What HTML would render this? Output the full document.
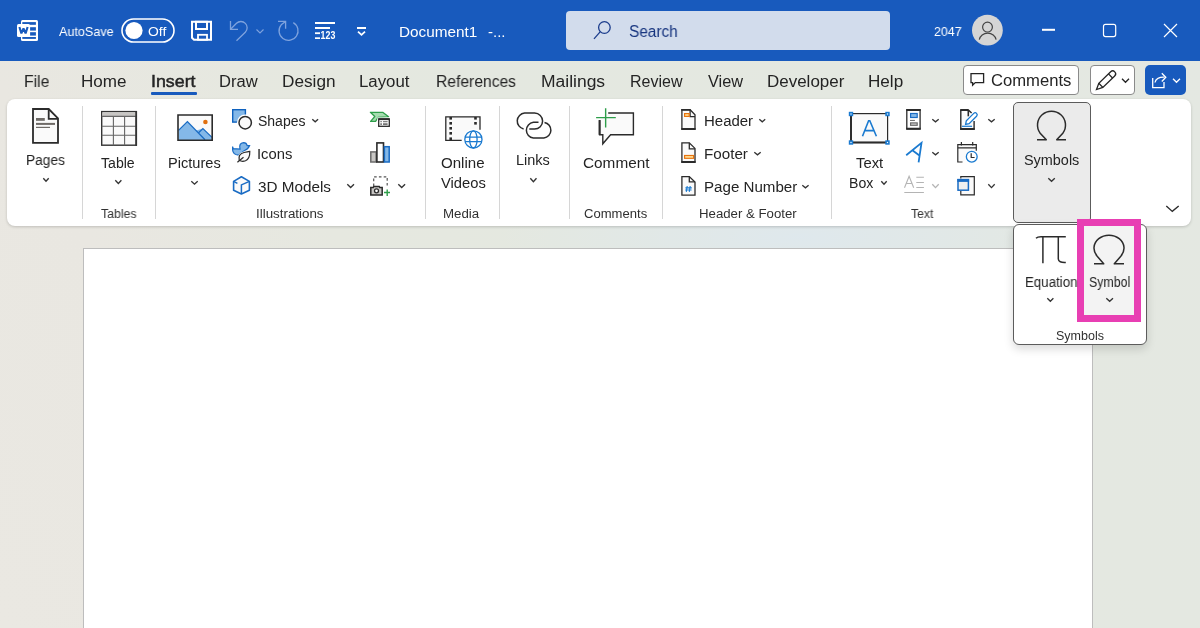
<!DOCTYPE html>
<html><head><meta charset="utf-8"><style>
html,body{margin:0;padding:0;}
body{width:1200px;height:628px;overflow:hidden;position:relative;font-family:"Liberation Sans",sans-serif;
background:radial-gradient(ellipse 300px 60px at 800px 237px, rgba(222,232,238,0.9), rgba(222,232,238,0) 100%),linear-gradient(60deg,#eae8e2 0%,#e9e7e1 20%,#e6e8e0 36%,#e4e8e0 50%,#e4e8e2 100%);}
.t{position:absolute;white-space:nowrap;transform-origin:0 0;will-change:transform;}
.a{position:absolute;overflow:visible}
#title{position:absolute;left:0;top:0;width:1200px;height:61px;background:#185abd;}
#search{position:absolute;left:566px;top:11px;width:324px;height:39px;background:#d2dcec;border-radius:4px;}
#ribbon{position:absolute;left:7px;top:99px;width:1184px;height:127px;background:#fff;border-radius:8px;box-shadow:0 1px 3px rgba(0,0,0,0.18);}
#page{position:absolute;left:83px;top:248px;width:1008px;height:400px;background:#fff;border:1px solid #bdbdbd;}
.sep{position:absolute;top:106px;width:1px;height:113px;background:#d6d6d6;}
#symbtn{position:absolute;left:1013px;top:102px;width:76px;height:119px;background:#ebebeb;border:1px solid #5c5c5c;border-radius:5px;}
#drop{position:absolute;left:1013px;top:224px;width:132px;height:119px;background:#fff;border:1px solid #5c5c5c;border-radius:6px;box-shadow:0 4px 10px rgba(0,0,0,0.15);}
#hl{position:absolute;left:1077px;top:219px;width:50px;height:89px;border:7px solid #e83fb3;background:#f3f3f3;}
.btn{position:absolute;top:65px;height:28px;background:#fff;border:1px solid #8a8a8a;border-radius:4px;}
</style></head><body>
<div id="title"></div>
<div id="search"></div>
<div class="btn" style="left:963px;width:114px"></div>
<div class="btn" style="left:1090px;width:43px"></div>
<div class="btn" style="left:1145px;width:41px;height:30px;border:none;background:#185abd;border-radius:5px"></div>
<div style="position:absolute;left:151px;top:92px;width:46px;height:3px;background:#185abd;border-radius:1px"></div>
<div id="page"></div>
<div id="ribbon"></div>
<div class="sep" style="left:82px"></div>
<div class="sep" style="left:155px"></div>
<div class="sep" style="left:425px"></div>
<div class="sep" style="left:499px"></div>
<div class="sep" style="left:569px"></div>
<div class="sep" style="left:662px"></div>
<div class="sep" style="left:831px"></div>
<div id="symbtn"></div>
<div id="drop"></div>
<div id="hl"></div>
<span class="t" style="left:58.70px;top:25px;font-size:13px;line-height:13px;color:#fff;font-weight:normal;transform:scaleX(0.9672)">AutoSave</span>
<span class="t" style="left:148.00px;top:25px;font-size:13px;line-height:13px;color:#fff;font-weight:normal;transform:scaleX(1.0693)">Off</span>
<span class="t" style="left:398.73px;top:24px;font-size:15px;line-height:15px;color:#fff;font-weight:normal;transform:scaleX(1.0210)">Document1</span>
<span class="t" style="left:488.00px;top:24px;font-size:15px;line-height:15px;color:#fff;font-weight:normal;transform:scaleX(0.9798)">-...</span>
<span class="t" style="left:629.20px;top:24px;font-size:16px;line-height:16px;color:#17357f;font-weight:normal;transform:scaleX(0.9619)">Search</span>
<span class="t" style="left:933.50px;top:25px;font-size:13px;line-height:13px;color:#fff;font-weight:normal;transform:scaleX(0.9516)">2047</span>
<span class="t" style="left:23.62px;top:74px;font-size:16px;line-height:16px;color:#242424;font-weight:normal;transform:scaleX(0.9806)">File</span>
<span class="t" style="left:81.43px;top:74px;font-size:16px;line-height:16px;color:#242424;font-weight:normal;transform:scaleX(1.0651)">Home</span>
<span class="t" style="left:150.89px;top:74px;font-size:16px;line-height:16px;color:#242424;font-weight:normal;-webkit-text-stroke:0.45px #242424;transform:scaleX(1.1119)">Insert</span>
<span class="t" style="left:218.97px;top:74px;font-size:16px;line-height:16px;color:#242424;font-weight:normal;transform:scaleX(1.0331)">Draw</span>
<span class="t" style="left:281.92px;top:74px;font-size:16px;line-height:16px;color:#242424;font-weight:normal;transform:scaleX(1.0750)">Design</span>
<span class="t" style="left:358.95px;top:74px;font-size:16px;line-height:16px;color:#242424;font-weight:normal;transform:scaleX(1.0506)">Layout</span>
<span class="t" style="left:436.02px;top:74px;font-size:16px;line-height:16px;color:#242424;font-weight:normal;transform:scaleX(0.9775)">References</span>
<span class="t" style="left:541.41px;top:74px;font-size:16px;line-height:16px;color:#242424;font-weight:normal;transform:scaleX(1.0921)">Mailings</span>
<span class="t" style="left:630.01px;top:74px;font-size:16px;line-height:16px;color:#242424;font-weight:normal;transform:scaleX(0.9922)">Review</span>
<span class="t" style="left:707.50px;top:74px;font-size:16px;line-height:16px;color:#242424;font-weight:normal;transform:scaleX(1.0191)">View</span>
<span class="t" style="left:766.94px;top:74px;font-size:16px;line-height:16px;color:#242424;font-weight:normal;transform:scaleX(1.0606)">Developer</span>
<span class="t" style="left:868.43px;top:74px;font-size:16px;line-height:16px;color:#242424;font-weight:normal;transform:scaleX(1.0685)">Help</span>
<span class="t" style="left:990.60px;top:73px;font-size:16px;line-height:16px;color:#242424;font-weight:normal;transform:scaleX(1.0394)">Comments</span>
<span class="t" style="left:26.42px;top:153px;font-size:14px;line-height:14px;color:#242424;font-weight:normal;transform:scaleX(0.9794)">Pages</span>
<span class="t" style="left:101.40px;top:156px;font-size:14px;line-height:14px;color:#242424;font-weight:normal;transform:scaleX(1.0065)">Table</span>
<span class="t" style="left:168.26px;top:156px;font-size:14px;line-height:14px;color:#242424;font-weight:normal;transform:scaleX(1.0429)">Pictures</span>
<span class="t" style="left:258.00px;top:114px;font-size:14px;line-height:14px;color:#242424;font-weight:normal;transform:scaleX(0.9962)">Shapes</span>
<span class="t" style="left:256.94px;top:147px;font-size:14px;line-height:14px;color:#242424;font-weight:normal;transform:scaleX(1.0566)">Icons</span>
<span class="t" style="left:258.00px;top:180px;font-size:14px;line-height:14px;color:#242424;font-weight:normal;transform:scaleX(1.0909)">3D Models</span>
<span class="t" style="left:440.90px;top:156px;font-size:14px;line-height:14px;color:#242424;font-weight:normal;transform:scaleX(1.0766)">Online</span>
<span class="t" style="left:440.50px;top:176px;font-size:14px;line-height:14px;color:#242424;font-weight:normal;transform:scaleX(1.0528)">Videos</span>
<span class="t" style="left:516.46px;top:153px;font-size:14px;line-height:14px;color:#242424;font-weight:normal;transform:scaleX(1.0353)">Links</span>
<span class="t" style="left:583.00px;top:156px;font-size:14px;line-height:14px;color:#242424;font-weight:normal;transform:scaleX(1.0955)">Comment</span>
<span class="t" style="left:703.73px;top:114px;font-size:14px;line-height:14px;color:#242424;font-weight:normal;transform:scaleX(1.0695)">Header</span>
<span class="t" style="left:703.71px;top:147px;font-size:14px;line-height:14px;color:#242424;font-weight:normal;transform:scaleX(1.0854)">Footer</span>
<span class="t" style="left:703.72px;top:180px;font-size:14px;line-height:14px;color:#242424;font-weight:normal;transform:scaleX(1.0803)">Page Number</span>
<span class="t" style="left:855.50px;top:156px;font-size:14px;line-height:14px;color:#242424;font-weight:normal;transform:scaleX(1.0587)">Text</span>
<span class="t" style="left:849.49px;top:176px;font-size:14px;line-height:14px;color:#242424;font-weight:normal;transform:scaleX(1.0076)">Box</span>
<span class="t" style="left:1023.90px;top:153px;font-size:14px;line-height:14px;color:#242424;font-weight:normal;transform:scaleX(1.0301)">Symbols</span>
<span class="t" style="left:1024.55px;top:275px;font-size:14px;line-height:14px;color:#242424;font-weight:normal;transform:scaleX(0.9498)">Equation</span>
<span class="t" style="left:1088.60px;top:275px;font-size:14px;line-height:14px;color:#242424;font-weight:normal;transform:scaleX(0.8846)">Symbol</span>
<span class="t" style="left:100.70px;top:208px;font-size:12.5px;line-height:12.5px;color:#303030;font-weight:normal;transform:scaleX(0.9810)">Tables</span>
<span class="t" style="left:256.43px;top:208px;font-size:12.5px;line-height:12.5px;color:#303030;font-weight:normal;transform:scaleX(1.0683)">Illustrations</span>
<span class="t" style="left:443.44px;top:208px;font-size:12.5px;line-height:12.5px;color:#303030;font-weight:normal;transform:scaleX(1.0637)">Media</span>
<span class="t" style="left:584.30px;top:208px;font-size:12.5px;line-height:12.5px;color:#303030;font-weight:normal;transform:scaleX(1.0452)">Comments</span>
<span class="t" style="left:698.84px;top:208px;font-size:12.5px;line-height:12.5px;color:#303030;font-weight:normal;transform:scaleX(1.0576)">Header &amp; Footer</span>
<span class="t" style="left:911.20px;top:208px;font-size:12.5px;line-height:12.5px;color:#303030;font-weight:normal;transform:scaleX(0.9722)">Text</span>
<span class="t" style="left:1055.80px;top:330px;font-size:12.5px;line-height:12.5px;color:#303030;font-weight:normal;transform:scaleX(0.9899)">Symbols</span>
<svg class="a" style="left:42px;top:177px" width="8" height="5.5" viewBox="42 177 8 5.5"><polyline points="43.3,178.3 46.0,181.3 48.7,178.3" fill="none" stroke="#333" stroke-width="1.35"/></svg><svg class="a" style="left:113.7px;top:179.3px" width="8.700000000000003" height="5.699999999999989" viewBox="113.7 179.3 8.700000000000003 5.699999999999989"><polyline points="115.0,180.60000000000002 118.05000000000001,183.8 121.10000000000001,180.60000000000002" fill="none" stroke="#333" stroke-width="1.35"/></svg><svg class="a" style="left:190.4px;top:179.6px" width="9.0" height="5.400000000000006" viewBox="190.4 179.6 9.0 5.400000000000006"><polyline points="191.70000000000002,180.9 194.9,183.8 198.1,180.9" fill="none" stroke="#333" stroke-width="1.35"/></svg><svg class="a" style="left:311.2px;top:117.5px" width="8.400000000000034" height="5.0" viewBox="311.2 117.5 8.400000000000034 5.0"><polyline points="312.5,118.8 315.4,121.3 318.3,118.8" fill="none" stroke="#333" stroke-width="1.35"/></svg><svg class="a" style="left:346.2px;top:183.2px" width="9.300000000000011" height="5.800000000000011" viewBox="346.2 183.2 9.300000000000011 5.800000000000011"><polyline points="347.5,184.5 350.85,187.8 354.2,184.5" fill="none" stroke="#333" stroke-width="1.35"/></svg><svg class="a" style="left:397.3px;top:183.2px" width="9.399999999999977" height="5.800000000000011" viewBox="397.3 183.2 9.399999999999977 5.800000000000011"><polyline points="398.6,184.5 402.0,187.8 405.4,184.5" fill="none" stroke="#333" stroke-width="1.35"/></svg><svg class="a" style="left:529px;top:176.6px" width="8.799999999999955" height="6.0" viewBox="529 176.6 8.799999999999955 6.0"><polyline points="530.3,177.9 533.4,181.4 536.5,177.9" fill="none" stroke="#333" stroke-width="1.35"/></svg><svg class="a" style="left:757.6px;top:117.5px" width="8.5" height="5.0" viewBox="757.6 117.5 8.5 5.0"><polyline points="758.9,118.8 761.85,121.3 764.8000000000001,118.8" fill="none" stroke="#333" stroke-width="1.35"/></svg><svg class="a" style="left:752.6px;top:150.5px" width="9.0" height="5.0" viewBox="752.6 150.5 9.0 5.0"><polyline points="753.9,151.8 757.1,154.3 760.3000000000001,151.8" fill="none" stroke="#333" stroke-width="1.35"/></svg><svg class="a" style="left:801.4px;top:183.6px" width="8.899999999999977" height="5.0" viewBox="801.4 183.6 8.899999999999977 5.0"><polyline points="802.6999999999999,184.9 805.8499999999999,187.4 809.0,184.9" fill="none" stroke="#333" stroke-width="1.35"/></svg><svg class="a" style="left:879.8px;top:179.6px" width="8.0" height="5.400000000000006" viewBox="879.8 179.6 8.0 5.400000000000006"><polyline points="881.0999999999999,180.9 883.8,183.8 886.5,180.9" fill="none" stroke="#333" stroke-width="1.35"/></svg><svg class="a" style="left:931.1px;top:117.5px" width="9.0" height="5.0" viewBox="931.1 117.5 9.0 5.0"><polyline points="932.4,118.8 935.6,121.3 938.8000000000001,118.8" fill="none" stroke="#333" stroke-width="1.35"/></svg><svg class="a" style="left:931.1px;top:150.5px" width="9.0" height="5.0" viewBox="931.1 150.5 9.0 5.0"><polyline points="932.4,151.8 935.6,154.3 938.8000000000001,151.8" fill="none" stroke="#333" stroke-width="1.35"/></svg><svg class="a" style="left:987.3px;top:117.5px" width="9.0" height="5.0" viewBox="987.3 117.5 9.0 5.0"><polyline points="988.5999999999999,118.8 991.8,121.3 995.0,118.8" fill="none" stroke="#333" stroke-width="1.35"/></svg><svg class="a" style="left:987.3px;top:183.2px" width="9.0" height="5.800000000000011" viewBox="987.3 183.2 9.0 5.800000000000011"><polyline points="988.5999999999999,184.5 991.8,187.8 995.0,184.5" fill="none" stroke="#333" stroke-width="1.35"/></svg><svg class="a" style="left:1046.5px;top:177px" width="9.099999999999909" height="5.5" viewBox="1046.5 177 9.099999999999909 5.5"><polyline points="1047.8,178.3 1051.05,181.3 1054.3,178.3" fill="none" stroke="#333" stroke-width="1.35"/></svg><svg class="a" style="left:1046.3px;top:297px" width="8.700000000000045" height="5.5" viewBox="1046.3 297 8.700000000000045 5.5"><polyline points="1047.6,298.3 1050.65,301.3 1053.7,298.3" fill="none" stroke="#333" stroke-width="1.35"/></svg><svg class="a" style="left:1104.7px;top:297px" width="9.299999999999955" height="5.5" viewBox="1104.7 297 9.299999999999955 5.5"><polyline points="1106.0,298.3 1109.35,301.3 1112.7,298.3" fill="none" stroke="#333" stroke-width="1.35"/></svg><svg class="a" style="left:931.1px;top:183.2px" width="9.0" height="5.800000000000011" viewBox="931.1 183.2 9.0 5.800000000000011"><polyline points="932.4,184.5 935.6,187.8 938.8000000000001,184.5" fill="none" stroke="#b4b4b4" stroke-width="1.35"/></svg>
<svg class="a" style="left:0;top:0" width="1200" height="628" viewBox="0 0 1200 628">
<!-- Word icon -->
<g>
<rect x="21" y="20" width="17" height="21" rx="1.5" fill="#fff"/>
<rect x="22.3" y="22.1" width="13.6" height="2.7" fill="#185abd"/>
<rect x="30.1" y="27.2" width="5.8" height="3.4" fill="#185abd"/>
<rect x="30.1" y="32.2" width="5.8" height="3.4" fill="#185abd"/>
<rect x="22.3" y="37" width="13.6" height="1.9" fill="#185abd"/>
<rect x="17" y="24" width="13" height="13" rx="1.5" fill="#fff"/>
<polyline points="19.4,27 21.4,33.4 23.5,28.4 25.6,33.4 27.6,27" fill="none" stroke="#185abd" stroke-width="2.1" stroke-linejoin="bevel"/>
</g>
<!-- toggle -->
<rect x="122" y="19" width="52" height="23" rx="11.5" fill="none" stroke="#fff" stroke-width="1.6"/>
<circle cx="134" cy="30.5" r="8.6" fill="#fff"/>
<!-- save -->
<path d="M192,21.8 H211 V39.8 H194 L192,37.8 Z" fill="none" stroke="#fff" stroke-width="2"/>
<rect x="196" y="21.8" width="11" height="7.2" fill="none" stroke="#fff" stroke-width="2"/>
<rect x="198" y="34.8" width="9" height="5" fill="none" stroke="#fff" stroke-width="1.8"/>
<!-- undo -->
<g fill="none" stroke="#7fa3de" stroke-width="1.3">
<path d="M230.5,21 V29.3 H238"/>
<path d="M230.8,29 L236.5,23.3 A6.2,6.2 0 0 1 245.3,32.2 L236.5,40.8"/>
<polyline points="256.5,29.5 260,33 263.5,29.5" stroke-width="1.1"/>
<path d="M293.3,22.6 A9.5,9.5 0 1 1 281.2,24.8 L285.6,21.4"/>
<path d="M278,21.4 H285.6 V28.7"/>
</g>
<!-- format -->
<g fill="#fff">
<rect x="315" y="22" width="20" height="2"/>
<rect x="315" y="27" width="15" height="2"/>
<rect x="315" y="32.3" width="5" height="1.8"/>
<rect x="315" y="37.3" width="5" height="1.7"/>
<text x="0" y="0" style="font-family:'Liberation Sans';font-size:11.3px;font-weight:bold" transform="translate(320.6 39) scale(0.78 1)">123</text>
<rect x="357" y="27" width="9" height="2"/>
</g>
<polyline points="358,31.6 361.5,34.8 365,31.6" fill="none" stroke="#fff" stroke-width="1.8"/>
<!-- avatar -->
<circle cx="987.4" cy="30.2" r="15.4" fill="#d5d5d5"/>
<circle cx="987.5" cy="27.1" r="4.9" fill="none" stroke="#444" stroke-width="1.2"/>
<path d="M979.3,39.6 A8.5,7.6 0 0 1 996.1,39.6" fill="none" stroke="#444" stroke-width="1.2"/>
<!-- window controls -->
<rect x="1042" y="28.8" width="13" height="2" fill="#fff"/>
<rect x="1103.5" y="24.4" width="12.2" height="12.2" rx="2" fill="none" stroke="#fff" stroke-width="1.2"/>
<path d="M1164,24 L1177,37 M1177,24 L1164,37" stroke="#fff" stroke-width="1.2"/>
<!-- search icon -->
<circle cx="604.4" cy="27.5" r="5.8" fill="none" stroke="#1c3d8c" stroke-width="1.3"/>
<path d="M600.3,31.6 L594,38.9" stroke="#1c3d8c" stroke-width="1.3"/>
<!-- comments icon -->
<path d="M971,82.6 V73.7 H983.6 V82.6 H975.3 L972.6,85.3 V82.6 Z" fill="none" stroke="#242424" stroke-width="1.3"/>
<!-- pen -->
<g transform="translate(1096.5 89.5) rotate(-44)" fill="none" stroke="#242424" stroke-width="1.3">
<path d="M0,0 L6,-2.9 H22.5 A2.9,2.9 0 0 1 22.5,2.9 H6 Z"/>
<path d="M6,-2.9 V2.9 M19.5,-2.9 V2.9"/>
</g>
<polyline points="1122,78.8 1125.5,82.3 1129,78.8" fill="none" stroke="#242424" stroke-width="1.3"/>
<!-- share -->
<g fill="none" stroke="#fff" stroke-width="1.3">
<path d="M1152.7,78 V87.6 H1164 V82"/>
<path d="M1155,82.5 Q1156,77 1164.5,77.2"/>
<path d="M1161.8,73.2 L1165.8,77.3 L1161.8,81.5"/>
<polyline points="1173,78.8 1176.5,82.3 1180,78.8"/>
</g>
<!-- Pages -->
<path d="M33,109 H48.7 L58,118.4 V142.8 H33 Z" fill="#fafafa" stroke="#2b2b2b" stroke-width="1.8"/>
<path d="M48.7,109 V118.9 H58" fill="none" stroke="#2b2b2b" stroke-width="1.8"/>
<rect x="36" y="118" width="8.8" height="2.8" fill="#6e6a66"/>
<rect x="36" y="122.9" width="19" height="2" fill="#6e6a66"/>
<rect x="36" y="126.8" width="14" height="1.2" fill="#6e6a66"/>
<!-- Table -->
<rect x="101.7" y="111.6" width="34.6" height="33.6" fill="#fafafa" stroke="#333" stroke-width="1.4"/>
<rect x="102.4" y="112.3" width="33.2" height="3.8" fill="#c8c6c4"/>
<path d="M101.7,116.4 H136.3 M101.7,126.3 H136.3 M101.7,135.3 H136.3 M113.4,116.4 V145.2 M124.6,116.4 V145.2" stroke="#666" stroke-width="1.1"/>
<path d="M136.2,111 V145.8" stroke="#333" stroke-width="1.8"/>
<!-- Pictures -->
<rect x="178" y="115" width="34.2" height="25.3" fill="#fafafa"/>
<path d="M178.5,130.4 L187.4,121.6 L196.2,130.4 L202.9,128.6 L212,137.4 V140.3 H178.5 Z" fill="#84b8e8"/>
<path d="M178.5,130.4 L187.4,121.6 L205,139.8 M198.6,132.8 L202.9,128.6 L212,137.4" fill="none" stroke="#1a6cc4" stroke-width="1.3"/>
<circle cx="205.4" cy="122" r="2.3" fill="#e07010"/>
<path d="M178,140.3 V115 H212.2 V140.3 Z" fill="none" stroke="#2b2b2b" stroke-width="1.6"/>
<!-- Shapes -->
<rect x="232.7" y="109.7" width="12.7" height="12.4" fill="#84b8e8" stroke="#0f62be" stroke-width="1.4"/>
<circle cx="245.2" cy="122.7" r="8.3" fill="#fff"/>
<circle cx="245.2" cy="122.7" r="6.2" fill="#fafafa" stroke="#2b2b2b" stroke-width="1.5"/>
<!-- Icons -->
<path d="M232.6,146.6 L233.3,148.6 L240,149 Q238.6,143 243.6,142.6 Q246.5,142.6 247.2,145.6 L249.6,145.6 Q248,149.5 244.5,150.5 L238.5,155.2 Q233,154.5 232.6,150 Z" fill="#84b8e8" stroke="#1a6cc4" stroke-width="1.2"/>
<path d="M239.2,160.3 Q237.8,154 244,152.5 Q247.5,152 249.8,151.4 Q250,158.5 245.5,160.8 Q242,162 239.2,160.3 Z" fill="#fff" stroke="#fff" stroke-width="2.2"/>
<path d="M239.2,160.3 Q237.8,154 244,152.5 Q247.5,152 249.8,151.4 Q250,158.5 245.5,160.8 Q242,162 239.2,160.3 Z" fill="#fafafa" stroke="#2b2b2b" stroke-width="1.2"/>
<path d="M237.4,162.3 L243.5,157.2" fill="none" stroke="#2b2b2b" stroke-width="1.2"/>
<!-- 3D -->
<path d="M241.4,176.8 L249.4,181.4 V190.3 L241.4,194 L233.6,190.3 V181.4 Z" fill="#fafafa" stroke="#1a6cc4" stroke-width="1.6" stroke-linejoin="round"/>
<path d="M241.4,194 V184.9 L249.4,181.4 M233.6,181.4 L237.4,183.4" fill="none" stroke="#1a6cc4" stroke-width="1.5"/>
<!-- SmartArt -->
<path d="M370.4,112.3 H382.7 L388.6,116.8 L378,117.5 L375.6,121.4 H370.6 L374.8,116.5 Z" fill="#a6ddb0" stroke="#2e9e4a" stroke-width="1.3" stroke-linejoin="round"/>
<rect x="377.4" y="117.4" width="13" height="10" fill="#fff"/>
<rect x="378.7" y="118.9" width="10.6" height="7.4" fill="#fff" stroke="#2b2b2b" stroke-width="1.3"/>
<rect x="378.7" y="118.3" width="10.6" height="1.8" fill="#2b2b2b"/>
<rect x="380.3" y="121.2" width="1.6" height="1" fill="#666"/><rect x="383" y="121.2" width="4.6" height="1" fill="#666"/>
<rect x="380.3" y="123.3" width="1.6" height="1.6" fill="#666"/><rect x="383" y="123.3" width="4.6" height="1.6" fill="#666"/>
<!-- Chart -->
<rect x="370.8" y="151.9" width="5.4" height="10.1" fill="#c8c6c4" stroke="#6b6b6b" stroke-width="1.5"/>
<rect x="376.9" y="142.9" width="6.6" height="19.1" fill="#fff" stroke="#2b2b2b" stroke-width="1.6"/>
<rect x="384.4" y="146.7" width="4.8" height="15.3" fill="#84b8e8" stroke="#1a6cc4" stroke-width="1.5"/>
<!-- Screenshot -->
<path d="M373.7,186 V176.8 H387.2 V187.5" fill="none" stroke="#555" stroke-width="1.2" stroke-dasharray="2.6 2.2"/>
<path d="M370.8,187.6 H373.2 L373.8,186.5 H379.2 L379.8,187.6 H382.2 V194.9 H370.8 Z" fill="#c8c6c4" stroke="#2b2b2b" stroke-width="1.5"/>
<circle cx="376.5" cy="190.8" r="2" fill="#fff" stroke="#2b2b2b" stroke-width="1.3"/>
<path d="M384,192.5 H390 M387.2,189.6 V195.9" stroke="#2e9e4a" stroke-width="1.4"/>
<!-- Online Video -->
<path d="M461.7,140.4 H445.8 V116.8 H480 V129.7" fill="#fafafa" stroke="#2b2b2b" stroke-width="1.3"/>
<g fill="#2b2b2b">
<rect x="449.4" y="117" width="2.6" height="2.6"/><rect x="449.4" y="122" width="2.6" height="2.6"/><rect x="449.4" y="127" width="2.6" height="2.6"/><rect x="449.4" y="132" width="2.6" height="2.6"/><rect x="449.4" y="137.4" width="2.6" height="2.6"/>
<rect x="474.2" y="117" width="2.6" height="2.6"/><rect x="474.2" y="122" width="2.6" height="2.6"/>
</g>
<circle cx="473.4" cy="139.4" r="10.4" fill="#fff"/>
<g fill="none" stroke="#1a7ad0" stroke-width="1.3">
<circle cx="473.4" cy="139.4" r="8.6"/>
<ellipse cx="473.4" cy="139.4" rx="3.7" ry="8.6"/>
<path d="M465,137.1 H481.8 M465,141.6 H481.8"/>
</g>
<!-- Links -->
<g fill="none" stroke="#2b2b2b" stroke-width="1.5">
<path d="M523.6,128.9 A8,8 0 0 1 524.6,113.1 H534.6 A8,8 0 0 1 534.6,129.1 H529.3"/>
<path d="M538.5,122.3 H533.4 A7.9,7.9 0 0 0 533.4,138 H543.9 A7.9,7.9 0 0 0 544.5,122.4"/>
</g>
<!-- Comment -->
<path d="M608.2,113 H633.4 V134.8 H610.6 L602.8,143.8 V134.8 H599.6 V120.1" fill="#fafafa" stroke="#2b2b2b" stroke-width="1.4"/>
<path d="M599.6,120.1 V134.8" stroke="#2b2b2b" stroke-width="2"/>
<path d="M596.1,117.65 H615.8 M605.65,108.2 V127.5" stroke="#2e9e4a" stroke-width="1.4"/>
<!-- Header/Footer/PageNum -->
<g fill="#fafafa" stroke="#2b2b2b" stroke-width="1.3">
<path d="M681.9,109.7 H690.1 L695,114.7 V129.1 H681.9 Z"/>
<path d="M681.9,142.8 H689.3 L695,148.4 V162.1 H681.9 Z"/>
<path d="M681.9,176.6 H689.3 L695,182 V195.2 H681.9 Z"/>
</g>
<g fill="none" stroke="#2b2b2b" stroke-width="1.3">
<path d="M690.1,109.7 V116.7 H695"/>
<path d="M689.3,142.8 V148.8 H695"/>
<path d="M689.3,176.6 V181.8 H695"/>
</g>
<path d="M681.3,109.8 H690.5 M681.3,129 H695.6 M681.3,162 H695.6" stroke="#2b2b2b" stroke-width="1.8"/>
<rect x="684.6" y="113.6" width="4.6" height="2.8" fill="#ffe39a" stroke="#e8730e" stroke-width="1.2"/>
<rect x="684.6" y="155.5" width="9" height="2.8" fill="#ffe39a" stroke="#e8730e" stroke-width="1.2"/>
<path d="M687.2,186 L686.3,191.8 M690.2,186 L689.3,191.8 M685.4,187.9 H691.8 M685.2,190 H691.6" stroke="#1a7ad0" stroke-width="1.1"/>
<!-- Text Box -->
<rect x="851" y="113.6" width="36.6" height="28.9" fill="#fafafa" stroke="#2b2b2b" stroke-width="1.2"/>
<path d="M851,114 V142.5 H887.5" fill="none" stroke="#2b2b2b" stroke-width="2"/>
<g fill="#fff" stroke="#1a7ad0" stroke-width="1.6">
<rect x="849.6" y="112.6" width="2.8" height="2.8"/><rect x="886.1" y="112.6" width="2.8" height="2.8"/>
<rect x="849.6" y="141.1" width="2.8" height="2.8"/><rect x="886.1" y="141.1" width="2.8" height="2.8"/>
</g>
<path d="M862.5,136.3 L868.6,120.8 H869.8 L876.4,136.3 M865.2,130.6 H873.8" fill="none" stroke="#1a7ad0" stroke-width="1.6"/>
<!-- Quick parts -->
<rect x="906.8" y="109.9" width="13.3" height="19" fill="#fff" stroke="#2b2b2b" stroke-width="1.3"/>
<path d="M906.2,110 H920.7 M906.2,128.8 H920.7" stroke="#2b2b2b" stroke-width="2"/>
<rect x="910.6" y="113.5" width="6.6" height="4" fill="#84b8e8" stroke="#1a6cc4" stroke-width="1.2"/>
<rect x="910" y="119.9" width="4.9" height="1" fill="#666"/>
<rect x="910.6" y="122.9" width="6.6" height="2.4" fill="#d0d0d0" stroke="#6b6b6b" stroke-width="1.2"/>
<!-- WordArt -->
<path d="M906.2,155.2 L921.5,142.8 L918.6,162.4 M912,150 L919.1,155.2" fill="none" stroke="#1a7ad0" stroke-width="1.8"/>
<!-- Drop cap (disabled) -->
<g fill="none" stroke="#b4b4b4" stroke-width="1.1">
<path d="M904.5,187.7 L909.1,176.3 L913.7,187.7 M906.2,183.5 H912"/>
<path d="M916.3,177.2 H923.9 M916.3,182.5 H923.9 M916.3,187.5 H923.9 M904.3,192.5 H923.9"/>
</g>
<!-- Signature line -->
<path d="M960.8,109.9 H968.3 L971.6,113.1 M960.8,109.9 V129 H974.1 V121" fill="#fafafa" stroke="#2b2b2b" stroke-width="1.4"/>
<path d="M960.2,110 H968.3 M960.2,129 H974.7" stroke="#2b2b2b" stroke-width="2"/>
<path d="M968.3,109.9 V116.3" stroke="#2b2b2b" stroke-width="1.6"/>
<g transform="translate(965.6 124.3) rotate(-45)" fill="#fff" stroke="#1a7ad0" stroke-width="1.3">
<path d="M0,0 L3,-2 H13.5 A2,2 0 0 1 13.5,2 H3 Z"/>
</g>
<path d="M962,126.3 H972.1" stroke="#1a7ad0" stroke-width="1.2"/>
<!-- Date time -->
<path d="M962.5,162 H957.8 V144.6 H976.3 V150.8" fill="#fafafa" stroke="#2b2b2b" stroke-width="1.2"/>
<path d="M957.8,147.9 H976.3 M961.4,142 V145.4 M972.7,142 V145.4" stroke="#2b2b2b" stroke-width="1.2"/>
<circle cx="971.75" cy="156.7" r="5.4" fill="#fff" stroke="#1a7ad0" stroke-width="1.3"/>
<path d="M971.2,153.3 V157.5 H974.6" fill="none" stroke="#2b2b2b" stroke-width="1.2"/>
<!-- Object -->
<path d="M960.8,178.5 V176.6 H974.3 V194.8 H960.8 V191" fill="#fafafa" stroke="#2b2b2b" stroke-width="1.2"/>
<rect x="958" y="179.6" width="10.4" height="10.6" fill="#f0f0f0" stroke="#1a6cc4" stroke-width="1.5"/>
<rect x="957.3" y="179" width="11.8" height="2.9" fill="#1a6cc4"/>
<!-- Omega symbols button -->
<g fill="none" stroke="#2b2b2b" stroke-width="1.5">
<path d="M1046.3,139.8 L1040.2,133.2 A14,13.8 0 1 1 1062.8,133.2 L1056.7,139.8"/>
<path d="M1037,139.8 H1046.8 M1056.2,139.8 H1066"/>
</g>
<!-- collapse chevron -->
<polyline points="1166.3,206 1172.3,211.4 1178.7,206" fill="none" stroke="#2b2b2b" stroke-width="1.4"/>
<!-- Pi -->
<g fill="none" stroke="#2b2b2b" stroke-width="1.5">
<path d="M1036,238.2 Q1037.5,236.8 1041,236.8 H1065.8"/>
<path d="M1042.9,237 V263.3"/>
<path d="M1058.3,237 V259 Q1058.5,262.8 1065.8,262.4"/>
</g>
<!-- Omega dropdown -->
<g fill="none" stroke="#2b2b2b" stroke-width="1.5">
<path d="M1103.7,263.7 L1097.4,256.4 A15,13 0 1 1 1120.6,256.4 L1114.3,263.7"/>
<path d="M1094,263.7 H1104.3 M1113.7,263.7 H1124"/>
</g>
</svg>

</body></html>
